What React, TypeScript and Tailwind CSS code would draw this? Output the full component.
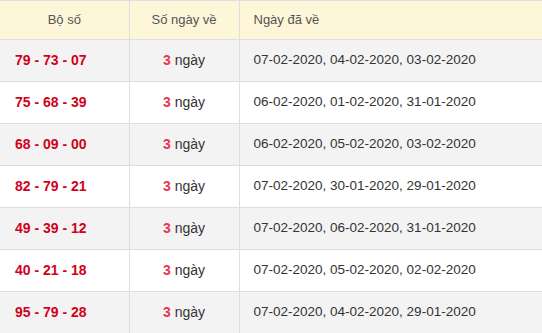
const rows = [
  { bo: '79 - 73 - 07', dates: '07-02-2020, 04-02-2020, 03-02-2020' },
  { bo: '75 - 68 - 39', dates: '06-02-2020, 01-02-2020, 31-01-2020' },
  { bo: '68 - 09 - 00', dates: '06-02-2020, 05-02-2020, 03-02-2020' },
  { bo: '82 - 79 - 21', dates: '07-02-2020, 30-01-2020, 29-01-2020' },
  { bo: '49 - 39 - 12', dates: '07-02-2020, 06-02-2020, 31-01-2020' },
  { bo: '40 - 21 - 18', dates: '07-02-2020, 05-02-2020, 02-02-2020' },
  { bo: '95 - 79 - 28', dates: '07-02-2020, 04-02-2020, 29-01-2020' },
];

export default function App() {
  return (
    <div className="w-[542px] h-[333px] overflow-hidden bg-white font-['Liberation_Sans',Arial,sans-serif]">
      <table className="w-full border-collapse">
        <thead>
          <tr className="h-[39px] bg-[#fdf6d9] text-[13px] text-[#555]">
            <th className="w-[129px] border border-[#dedede] border-l-0 font-normal text-center">Bộ số</th>
            <th className="w-[110px] border border-[#dedede] font-normal text-center">Số ngày về</th>
            <th className="border border-[#dedede] border-r-0 font-normal text-left pl-[14px]">Ngày đã về</th>
          </tr>
        </thead>
        <tbody>
          {rows.map((r, i) => (
            <tr key={i} className={`h-[42px] ${i % 2 === 0 ? 'bg-[#f3f3f3]' : 'bg-white'}`}>
              <td className="border border-[#dedede] border-l-0 pl-[15px] text-[14px] font-bold text-[#d0021b]">{r.bo}</td>
              <td className="border border-[#dedede] text-center text-[14px] text-[#333]">
                <span className="font-bold text-[#e8384f]">3</span> ngày
              </td>
              <td className="border border-[#dedede] border-r-0 pl-[14px] text-[13.5px] text-[#333]">{r.dates}</td>
            </tr>
          ))}
        </tbody>
      </table>
    </div>
  );
}
